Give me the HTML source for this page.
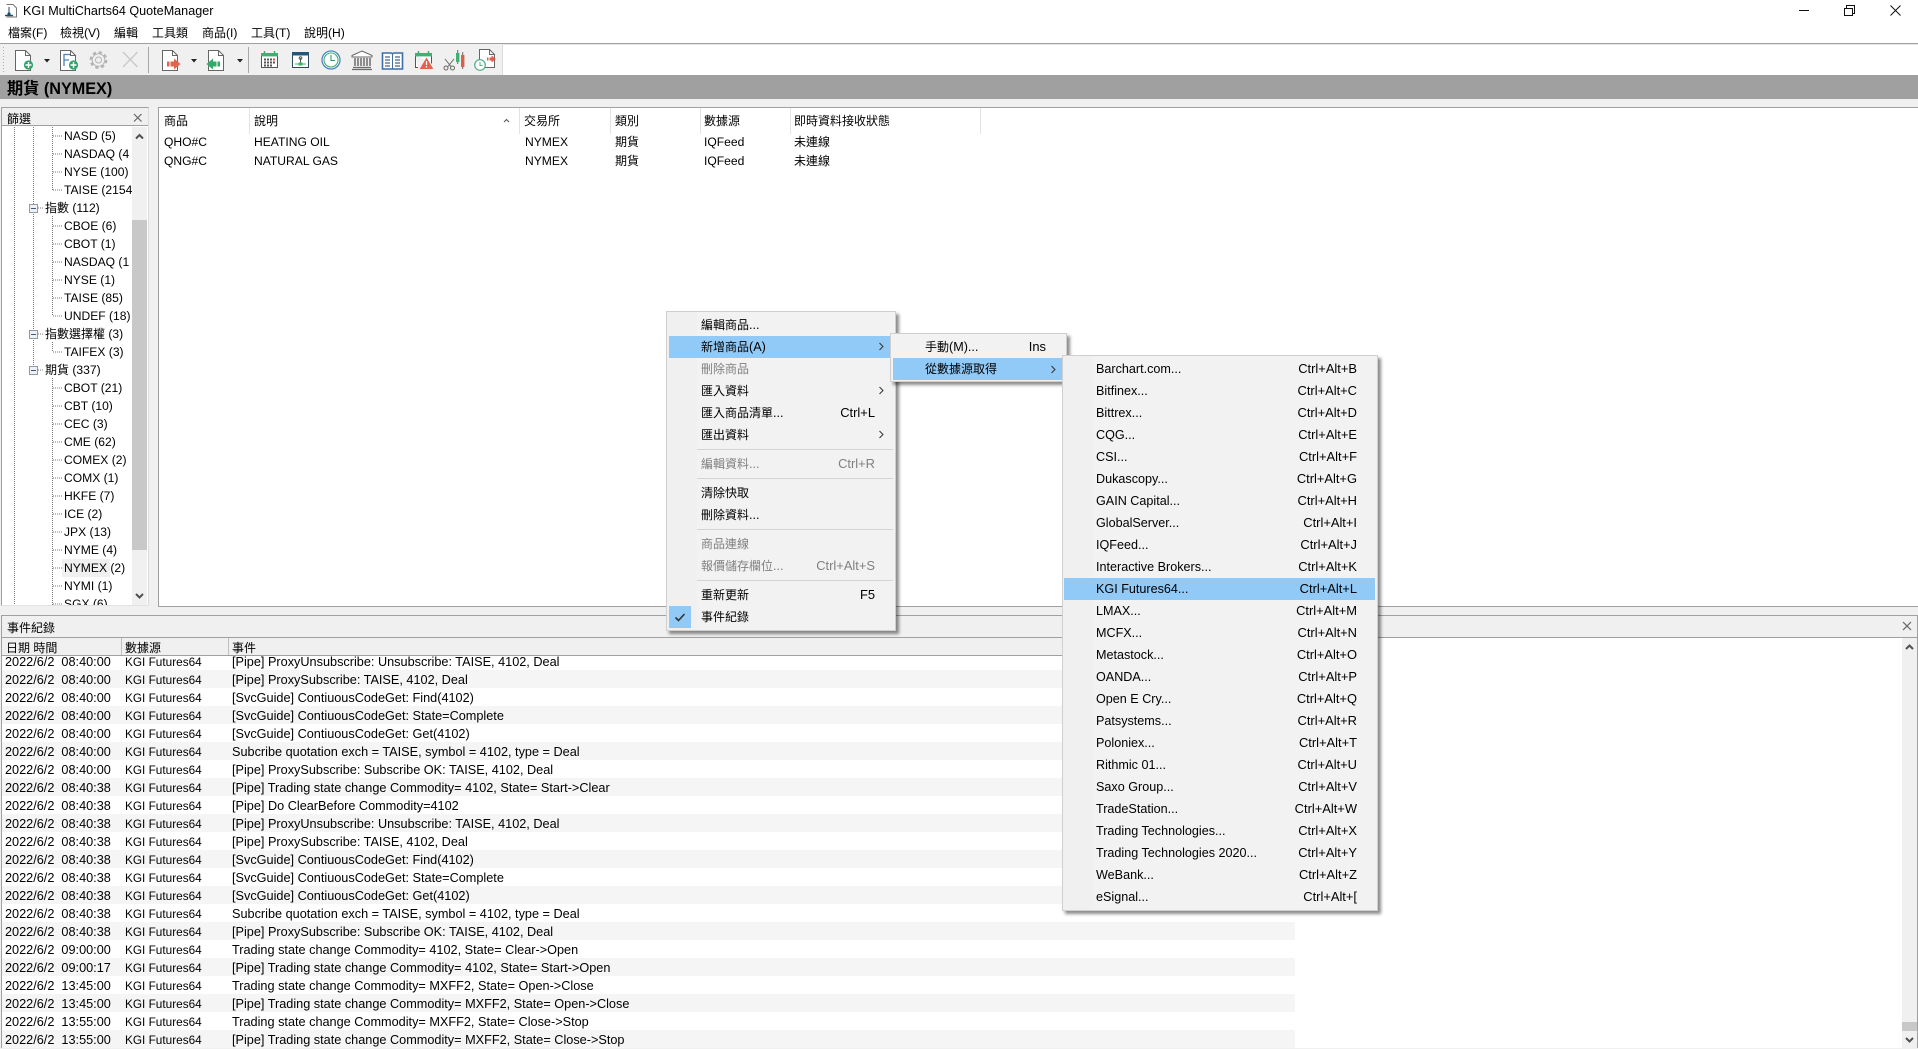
<!DOCTYPE html>
<html><head><meta charset="utf-8"><title>KGI MultiCharts64 QuoteManager</title>
<style>
html,body{margin:0;padding:0;width:1918px;height:1049px;overflow:hidden;background:#fff}
body{position:relative;font-family:"Liberation Sans","Noto Sans CJK TC",sans-serif;font-size:12.1px;color:#000}
div{position:absolute;box-sizing:border-box}
i{font-style:normal;font-size:12px}
.t{position:absolute;white-space:pre;height:16px;line-height:16px}
.tr{position:absolute;white-space:pre;height:16px;line-height:16px;text-align:right}
#mn{left:0;top:0;width:0;height:0;font-size:12.6px}
#mn .tr{font-size:12.9px}
.r{left:2px;width:1293px;height:18px;background:#fff}
.r.g{background:#f5f5f5}
.r span{position:absolute;top:0;line-height:21px;white-space:pre}
.r .a{left:3px;font-size:12.7px}.r .b{left:123px;font-size:11.8px}.r .c{left:230px;font-size:12.7px}
.m{background:#f2f2f2;border:1px solid #cfcfcf;box-shadow:3px 3px 3px rgba(0,0,0,.45)}
.d{color:#808080}
.h{background:#91c9f7}
.sp{height:1px;background:#d4d4d4}
.vs{width:1px;background:#e3e3e3}
</style></head><body>

<!-- title bar -->
<svg style="position:absolute;left:0;top:0" width="24" height="24"><path d="M6.5 4.5H13l3.5 3.5V17H6.5" fill="none" stroke="#777"/><path d="M5 15.5h8" stroke="#1d4a68" stroke-width="1.4"/><circle cx="9" cy="14" r="1.6" fill="#1d4a68"/><path d="M9 7v6" stroke="#1d4a68"/></svg>
<div class="t" style="left:23px;top:3px;font-size:12.6px">KGI MultiCharts64 QuoteManager</div>
<svg style="position:absolute;left:1790px;top:0" width="128" height="22" fill="none" stroke="#111"><path d="M9 10.5h10"/><path d="M54.5 8.5h8v7h-8zM56.5 8V5.5h8v8h-2"/><path d="M100.5 5.5l10 10M110.5 5.5l-10 10"/></svg>

<!-- menu bar -->
<div class="t" style="left:8px;top:25px"><i>檔案</i>(F)</div>
<div class="t" style="left:60px;top:25px"><i>檢視</i>(V)</div>
<div class="t" style="left:114px;top:25px"><i>編輯</i></div>
<div class="t" style="left:152px;top:25px"><i>工具類</i></div>
<div class="t" style="left:202px;top:25px"><i>商品</i>(I)</div>
<div class="t" style="left:251px;top:25px"><i>工具</i>(T)</div>
<div class="t" style="left:304px;top:25px"><i>說明</i>(H)</div>

<!-- toolbar -->
<div style="left:0;top:43px;width:1918px;height:1px;background:#a0a0a0"></div>
<div style="left:0;top:44px;width:1918px;height:1px;background:#e8e8e8"></div>
<div style="left:0;top:44px;width:503px;height:31px;background:#f0f0f0;border-right:1px solid #dcdcdc"></div>
<svg style="position:absolute;left:0;top:0" width="510" height="76">
<path d="M3.5 47v25" stroke="#b0b0b0" stroke-dasharray="1 2"/>
<g fill="#fff" stroke="#666">
<path d="M15.5 50.5h10l5 5v15h-15z"/>
<path d="M60.5 50.5h10l5 5v15h-15z"/>
<path d="M162.5 50.5h10l5 5v15h-15z"/>
<path d="M208.5 50.5h10l5 5v15h-15z"/>
<path d="M479.5 49.5h10l5 5v13h-15z"/>
</g>
<g fill="none" stroke="#666"><path d="M25.5 50.5v5h5M70.5 50.5v5h5M172.5 50.5v5h5M218.5 50.5v5h5M489.5 49.5v5h5"/></g>
<circle cx="28.5" cy="65" r="4.6" fill="#2fa36b"/><path d="M28.5 62v6M25.5 65h6" stroke="#fff" stroke-width="1.4"/>
<circle cx="73.5" cy="65" r="4.6" fill="#2fa36b"/><path d="M73.5 62v6M70.5 65h6" stroke="#fff" stroke-width="1.4"/>
<path d="M64 66V54.5h6M64 60h5" fill="none" stroke="#4a7fbf" stroke-width="1.3"/>
<path d="M44 59h6l-3 3.5z M191 59h6l-3 3.5z M237 59h6l-3 3.5z" fill="#222"/>
<!-- gear -->
<circle cx="98.5" cy="60" r="7.2" fill="none" stroke="#b4b4b4" stroke-width="3.4" stroke-dasharray="3 2.65"/>
<circle cx="98.5" cy="60" r="6.3" fill="#f0f0f0" stroke="#b4b4b4"/>
<circle cx="98.5" cy="60" r="3" fill="#f0f0f0" stroke="#b4b4b4"/>
<path d="M123 52l14.5 15M137.5 52L123 67" stroke="#c9c9c9" stroke-width="1.4"/>
<path d="M148.5 47v26M248.5 47v26" stroke="#a8a8a8"/>
<!-- red arrow -->
<path d="M167 61.500h2.500v5H167zM170.500 61.500h3.500v5h-3.500zM174 58.500l6.500 5.500-6.500 5.500z" fill="#e0654e"/>
<!-- green arrow -->
<path d="M206.500 64l6.500-5.500v11zM213 61.500h3.500v5H213zM217.500 61.500h2.500v5h-2.500z" fill="#33a96a"/>
<!-- calendar -->
<rect x="261.5" y="53.5" width="16" height="14" fill="#fff" stroke="#555"/>
<rect x="261" y="53" width="17" height="3.4" fill="#3eb06f"/><path d="M264.5 51v3M274.5 51v3" stroke="#3eb06f" stroke-width="1.5"/>
<g fill="#555"><rect x="264" y="58.5" width="2" height="2"/><rect x="267" y="58.5" width="2" height="2"/><rect x="270" y="58.5" width="2" height="2"/><rect x="273" y="58.5" width="2" height="2" fill="#d8543f"/><rect x="264" y="61.5" width="2" height="2"/><rect x="267" y="61.5" width="2" height="2"/><rect x="270" y="61.5" width="2" height="2"/><rect x="273" y="61.5" width="2" height="2"/><rect x="264" y="64.5" width="2" height="2"/><rect x="267" y="64.5" width="2" height="2"/><rect x="270" y="64.5" width="2" height="2"/></g>
<!-- window -->
<rect x="292.5" y="52.5" width="16" height="15" fill="#fff" stroke="#2d4a5e"/><rect x="292" y="52" width="17" height="3.5" fill="#245678"/>
<path d="M295 64h11" stroke="#3eb06f"/><path d="M300.5 58v5" stroke="#555"/><circle cx="300.5" cy="58" r="1.3" fill="none" stroke="#555"/><rect x="298.5" y="62.5" width="4" height="3" fill="#3eb06f"/>
<!-- clock -->
<circle cx="331" cy="60" r="9" fill="#fff" stroke="#4a86c5" stroke-width="1.3"/><circle cx="331" cy="60" r="7" fill="none" stroke="#3eb06f" stroke-width="1.1"/><path d="M331 55v5.5h4" fill="none" stroke="#2f8f63"/>
<!-- bank -->
<path d="M362 51l10 4.5v1.5h-20v-1.5z" fill="#fff" stroke="#6a6a6a"/>
<path d="M355 58v8M358 58v8M361 58v8M364 58v8M367 58v8M370 58v8" stroke="#6a6a6a" stroke-width="1.5"/>
<path d="M353 67.5h18M352 69.5h20" stroke="#6a6a6a" stroke-width="1.3"/>
<!-- book -->
<path d="M382.5 53h8.5c1 0 1.5 .8 1.5 1.5 0-.7.5-1.500 1.500-1.500h8.500v16h-20z" fill="#fff" stroke="#3d6ea5" stroke-width="1.6"/>
<path d="M392.500 54v15" stroke="#3d6ea5"/>
<path d="M385 57h5M385 60h5M385 63h5M385 66h5M395 57h5M395 60h5M395 63h5M395 66h5" stroke="#1f3f5f" stroke-width="1.1"/>
<!-- calendar warn -->
<path d="M415.500 54.500h16v9M418 67.500h-2.500v-13" fill="#fff" stroke="#555"/>
<rect x="415" y="53" width="17" height="3.4" fill="#3eb06f"/><path d="M418.500 51v3M428.500 51v3" stroke="#3eb06f" stroke-width="1.5"/>
<path d="M426.500 57.500l6.800 11.500h-13.600z" fill="#e8604c"/><path d="M426.500 61v4M426.500 66v1.500" stroke="#fff" stroke-width="1.200"/>
<!-- scissors + candles -->
<path d="M457.700 50v14" stroke="#666"/><rect x="456" y="53" width="3.400" height="9" fill="#3eb06f"/>
<path d="M462.700 52v17" stroke="#666"/><rect x="461" y="55" width="3.400" height="12" fill="#d8604c"/>
<path d="M454 59l-6 7.500M445 59l6 7.500" stroke="#666"/>
<circle cx="446" cy="68" r="2" fill="none" stroke="#666"/><circle cx="452.500" cy="68" r="2" fill="none" stroke="#666"/>
<!-- doc clock -->
<circle cx="480" cy="65" r="5.300" fill="#fff" stroke="#4caf7d" stroke-width="1.200"/><path d="M480 62v3.500h2.500" fill="none" stroke="#4caf7d"/>
<path d="M487 57.500h1.500v3h-1.500zM489.500 57.500h2v3h-2zM491.500 55.500l4.500 3.500-4.500 3.500z" fill="#d8604c"/>
</svg>

<!-- section header -->
<div style="left:0;top:75px;width:1918px;height:24px;background:#a0a0a0"></div>
<div class="t" style="left:7px;top:81px;font-size:16.2px;font-weight:bold">期貨 (NYMEX)</div>
<div style="left:0;top:99px;width:1918px;height:950px;background:#f0f0f0"></div>

<!-- left panel -->
<div style="left:1px;top:107px;width:148px;height:499px;background:#fff;border:1px solid #a0a0a0;border-right:1px solid #dcdcdc;border-bottom:1px solid #e2e2e2;overflow:hidden"></div>
<div style="left:2px;top:108px;width:146px;height:18px;background:#f0f0f0;border-bottom:1px solid #a0a0a0"></div>
<div class="t" style="left:7px;top:111px"><i>篩選</i></div>
<svg style="position:absolute;left:132px;top:112px" width="16" height="14"><path d="M2 2l7.500 7.500M9.500 2L2 9.500" stroke="#666" stroke-width="1.200"/></svg>
<svg style="position:absolute;left:0;top:127px" width="132" height="478">
<g stroke="#777" stroke-dasharray="1 1" fill="none">
<path d="M14.500 0v478M33.500 0v79M33.500 87v155M52.500 0v63M52.500 89v100M52.500 215v10M52.500 251v227M33.500 213v22"/>
<path d="M53 9h9M53 27h9M53 45h9M53 63h9M53 99h9M53 117h9M53 135h9M53 153h9M53 171h9M53 189h9M53 225h9M53 261h9M53 279h9M53 297h9M53 315h9M53 333h9M53 351h9M53 369h9M53 387h9M53 405h9M53 423h9M53 441h9M53 459h9M53 477h9M38 81h5M38 207h5M38 243h5"/>
</g>
<g fill="#fff" stroke="#8f9aa6"><rect x="29.500" y="77.500" width="8" height="8" fill="#eef1f5"/><rect x="29.500" y="203.500" width="8" height="8" fill="#eef1f5"/><rect x="29.500" y="239.500" width="8" height="8" fill="#eef1f5"/></g>
<path d="M31 81.500h5M31 207.500h5M31 243.500h5" stroke="#3a5a80"/>
</svg>
<div style="left:62px;top:559px;width:48px;height:18px;background:#f0f0f0"></div>
<div style="left:2px;top:127px;width:130px;height:478px;overflow:hidden">
<div class="t" style="left:62px;top:1px">NASD (5)</div>
<div class="t" style="left:62px;top:19px">NASDAQ (4</div>
<div class="t" style="left:62px;top:37px">NYSE (100)</div>
<div class="t" style="left:62px;top:55px">TAISE (2154</div>
<div class="t" style="left:43px;top:73px"><i>指數</i> (112)</div>
<div class="t" style="left:62px;top:91px">CBOE (6)</div>
<div class="t" style="left:62px;top:109px">CBOT (1)</div>
<div class="t" style="left:62px;top:127px">NASDAQ (1</div>
<div class="t" style="left:62px;top:145px">NYSE (1)</div>
<div class="t" style="left:62px;top:163px">TAISE (85)</div>
<div class="t" style="left:62px;top:181px">UNDEF (18)</div>
<div class="t" style="left:43px;top:199px"><i>指數選擇權</i> (3)</div>
<div class="t" style="left:62px;top:217px">TAIFEX (3)</div>
<div class="t" style="left:43px;top:235px"><i>期貨</i> (337)</div>
<div class="t" style="left:62px;top:253px">CBOT (21)</div>
<div class="t" style="left:62px;top:271px">CBT (10)</div>
<div class="t" style="left:62px;top:289px">CEC (3)</div>
<div class="t" style="left:62px;top:307px">CME (62)</div>
<div class="t" style="left:62px;top:325px">COMEX (2)</div>
<div class="t" style="left:62px;top:343px">COMX (1)</div>
<div class="t" style="left:62px;top:361px">HKFE (7)</div>
<div class="t" style="left:62px;top:379px">ICE (2)</div>
<div class="t" style="left:62px;top:397px">JPX (13)</div>
<div class="t" style="left:62px;top:415px">NYME (4)</div>
<div class="t" style="left:62px;top:433px">NYMEX (2)</div>
<div class="t" style="left:62px;top:451px">NYMI (1)</div>
<div class="t" style="left:62px;top:469px">SGX (6)</div>
</div>
<div style="left:132px;top:127px;width:15px;height:478px;background:#f0f0f0"></div>
<div style="left:132px;top:220px;width:15px;height:330px;background:#c8c8c8"></div>
<svg style="position:absolute;left:132px;top:127px" width="15" height="478" fill="none" stroke="#505050" stroke-width="2"><path d="M4 11.500l3.500-3.500 3.500 3.500M4 467l3.500 3.500 3.500-3.500"/></svg>

<!-- right panel -->
<div style="left:158px;top:107px;width:1760px;height:500px;background:#fff;border:1px solid #a0a0a0;border-right:0"></div>
<div class="vs" style="left:249px;top:108px;height:26px"></div>
<div class="vs" style="left:519px;top:108px;height:26px"></div>
<div class="vs" style="left:610px;top:108px;height:26px"></div>
<div class="vs" style="left:700px;top:108px;height:26px"></div>
<div class="vs" style="left:790px;top:108px;height:26px"></div>
<div class="vs" style="left:980px;top:108px;height:26px"></div>
<div class="t" style="left:164px;top:113px"><i>商品</i></div>
<div class="t" style="left:254px;top:113px"><i>說明</i></div>
<svg style="position:absolute;left:503px;top:118px" width="8" height="6"><path d="M1 4l2.500-2.500L6 4" fill="none" stroke="#555"/></svg>
<div class="t" style="left:524px;top:113px"><i>交易所</i></div>
<div class="t" style="left:615px;top:113px"><i>類別</i></div>
<div class="t" style="left:704px;top:113px"><i>數據源</i></div>
<div class="t" style="left:794px;top:113px"><i>即時資料接收狀態</i></div>
<div class="t" style="left:164px;top:134px">QHO#C</div><div class="t" style="left:254px;top:134px">HEATING OIL</div><div class="t" style="left:525px;top:134px">NYMEX</div><div class="t" style="left:615px;top:134px"><i>期貨</i></div><div class="t" style="left:704px;top:134px">IQFeed</div><div class="t" style="left:794px;top:134px"><i>未連線</i></div>
<div class="t" style="left:164px;top:153px">QNG#C</div><div class="t" style="left:254px;top:153px">NATURAL GAS</div><div class="t" style="left:525px;top:153px">NYMEX</div><div class="t" style="left:615px;top:153px"><i>期貨</i></div><div class="t" style="left:704px;top:153px">IQFeed</div><div class="t" style="left:794px;top:153px"><i>未連線</i></div>

<!-- bottom panel -->
<div style="left:1px;top:615px;width:1917px;height:434px;background:#fff;border-top:1px solid #a0a0a0;border-left:1px solid #a0a0a0;border-right:1px solid #a0a0a0"></div>
<div style="left:2px;top:616px;width:1915px;height:22px;background:#f0f0f0;border-bottom:1px solid #a0a0a0"></div>
<div class="t" style="left:7px;top:620px"><i>事件紀錄</i></div>
<svg style="position:absolute;left:1902px;top:620px" width="12" height="14"><path d="M1 2l8 8M9 2l-8 8" stroke="#666" stroke-width="1.200"/></svg>
<div style="left:2px;top:638px;width:1295px;height:18px;background:#f0f0f0;border-bottom:1px solid #a0a0a0"></div>
<div style="left:121px;top:638px;width:1px;height:17px;background:#c0c0c0"></div>
<div style="left:228px;top:638px;width:1px;height:17px;background:#c0c0c0"></div>
<div class="t" style="left:6px;top:640px"><i>日期 時間</i></div>
<div class="t" style="left:125px;top:640px"><i>數據源</i></div>
<div class="t" style="left:232px;top:640px"><i>事件</i></div>
<div style="left:0;top:656px;width:1295px;height:392px;overflow:hidden">
<div class="r" style="top:-4px"><span class="a">2022/6/2  08:40:00</span><span class="b">KGI Futures64</span><span class="c">[Pipe] ProxyUnsubscribe: Unsubscribe: TAISE, 4102, Deal</span></div>
<div class="r g" style="top:14px"><span class="a">2022/6/2  08:40:00</span><span class="b">KGI Futures64</span><span class="c">[Pipe] ProxySubscribe: TAISE, 4102, Deal</span></div>
<div class="r" style="top:32px"><span class="a">2022/6/2  08:40:00</span><span class="b">KGI Futures64</span><span class="c">[SvcGuide] ContiuousCodeGet: Find(4102)</span></div>
<div class="r g" style="top:50px"><span class="a">2022/6/2  08:40:00</span><span class="b">KGI Futures64</span><span class="c">[SvcGuide] ContiuousCodeGet: State=Complete</span></div>
<div class="r" style="top:68px"><span class="a">2022/6/2  08:40:00</span><span class="b">KGI Futures64</span><span class="c">[SvcGuide] ContiuousCodeGet: Get(4102)</span></div>
<div class="r g" style="top:86px"><span class="a">2022/6/2  08:40:00</span><span class="b">KGI Futures64</span><span class="c">Subcribe quotation exch = TAISE, symbol = 4102, type = Deal</span></div>
<div class="r" style="top:104px"><span class="a">2022/6/2  08:40:00</span><span class="b">KGI Futures64</span><span class="c">[Pipe] ProxySubscribe: Subscribe OK: TAISE, 4102, Deal</span></div>
<div class="r g" style="top:122px"><span class="a">2022/6/2  08:40:38</span><span class="b">KGI Futures64</span><span class="c">[Pipe] Trading state change Commodity= 4102, State= Start-&gt;Clear</span></div>
<div class="r" style="top:140px"><span class="a">2022/6/2  08:40:38</span><span class="b">KGI Futures64</span><span class="c">[Pipe] Do ClearBefore Commodity=4102</span></div>
<div class="r g" style="top:158px"><span class="a">2022/6/2  08:40:38</span><span class="b">KGI Futures64</span><span class="c">[Pipe] ProxyUnsubscribe: Unsubscribe: TAISE, 4102, Deal</span></div>
<div class="r" style="top:176px"><span class="a">2022/6/2  08:40:38</span><span class="b">KGI Futures64</span><span class="c">[Pipe] ProxySubscribe: TAISE, 4102, Deal</span></div>
<div class="r g" style="top:194px"><span class="a">2022/6/2  08:40:38</span><span class="b">KGI Futures64</span><span class="c">[SvcGuide] ContiuousCodeGet: Find(4102)</span></div>
<div class="r" style="top:212px"><span class="a">2022/6/2  08:40:38</span><span class="b">KGI Futures64</span><span class="c">[SvcGuide] ContiuousCodeGet: State=Complete</span></div>
<div class="r g" style="top:230px"><span class="a">2022/6/2  08:40:38</span><span class="b">KGI Futures64</span><span class="c">[SvcGuide] ContiuousCodeGet: Get(4102)</span></div>
<div class="r" style="top:248px"><span class="a">2022/6/2  08:40:38</span><span class="b">KGI Futures64</span><span class="c">Subcribe quotation exch = TAISE, symbol = 4102, type = Deal</span></div>
<div class="r g" style="top:266px"><span class="a">2022/6/2  08:40:38</span><span class="b">KGI Futures64</span><span class="c">[Pipe] ProxySubscribe: Subscribe OK: TAISE, 4102, Deal</span></div>
<div class="r" style="top:284px"><span class="a">2022/6/2  09:00:00</span><span class="b">KGI Futures64</span><span class="c">Trading state change Commodity= 4102, State= Clear-&gt;Open</span></div>
<div class="r g" style="top:302px"><span class="a">2022/6/2  09:00:17</span><span class="b">KGI Futures64</span><span class="c">[Pipe] Trading state change Commodity= 4102, State= Start-&gt;Open</span></div>
<div class="r" style="top:320px"><span class="a">2022/6/2  13:45:00</span><span class="b">KGI Futures64</span><span class="c">Trading state change Commodity= MXFF2, State= Open-&gt;Close</span></div>
<div class="r g" style="top:338px"><span class="a">2022/6/2  13:45:00</span><span class="b">KGI Futures64</span><span class="c">[Pipe] Trading state change Commodity= MXFF2, State= Open-&gt;Close</span></div>
<div class="r" style="top:356px"><span class="a">2022/6/2  13:55:00</span><span class="b">KGI Futures64</span><span class="c">Trading state change Commodity= MXFF2, State= Close-&gt;Stop</span></div>
<div class="r g" style="top:374px"><span class="a">2022/6/2  13:55:00</span><span class="b">KGI Futures64</span><span class="c">[Pipe] Trading state change Commodity= MXFF2, State= Close-&gt;Stop</span></div>
</div>
<div style="left:1902px;top:638px;width:15px;height:410px;background:#f0f0f0"></div>
<div style="left:1902px;top:1022px;width:15px;height:9px;background:#c8c8c8"></div>
<svg style="position:absolute;left:1902px;top:638px" width="15" height="410" fill="none" stroke="#505050" stroke-width="2"><path d="M4 11l3.500-3.500L11 11M4 400l3.500 3.500 3.500-3.500"/></svg>
<div style="left:1px;top:1048px;width:1917px;height:1px;background:#f0f0f0"></div>

<div id="mn">
<!-- context menu -->
<div class="m" style="left:666px;top:311px;width:230px;height:320px"></div>
<div style="left:667px;top:312px;width:30px;height:318px;background:#f0f0f0"></div>
<div class="h" style="left:669px;top:336px;width:222px;height:22px"></div>
<div class="h" style="left:669px;top:606px;width:22px;height:22px"></div>
<svg style="position:absolute;left:669px;top:606px" width="22" height="22"><path d="M6.500 11.500l3 3 6-6.500" fill="none" stroke="#333" stroke-width="1.600"/></svg>
<div class="sp" style="left:697px;top:449px;width:196px"></div>
<div class="sp" style="left:697px;top:478px;width:196px"></div>
<div class="sp" style="left:697px;top:529px;width:196px"></div>
<div class="sp" style="left:697px;top:580px;width:196px"></div>
<div class="t" style="left:701px;top:317px"><i>編輯商品</i>...</div>
<div class="t" style="left:701px;top:339px"><i>新增商品</i>(A)</div>
<div class="t d" style="left:701px;top:361px"><i>刪除商品</i></div>
<div class="t" style="left:701px;top:383px"><i>匯入資料</i></div>
<div class="t" style="left:701px;top:405px"><i>匯入商品清單</i>...</div>
<div class="tr" style="left:775px;top:405px;width:100px">Ctrl+L</div>
<div class="t" style="left:701px;top:427px"><i>匯出資料</i></div>
<div class="t d" style="left:701px;top:456px"><i>編輯資料</i>...</div>
<div class="tr d" style="left:775px;top:456px;width:100px">Ctrl+R</div>
<div class="t" style="left:701px;top:485px"><i>清除快取</i></div>
<div class="t" style="left:701px;top:507px"><i>刪除資料</i>...</div>
<div class="t d" style="left:701px;top:536px"><i>商品連線</i></div>
<div class="t d" style="left:701px;top:558px"><i>報價儲存欄位</i>...</div>
<div class="tr d" style="left:775px;top:558px;width:100px">Ctrl+Alt+S</div>
<div class="t" style="left:701px;top:587px"><i>重新更新</i></div>
<div class="tr" style="left:775px;top:587px;width:100px">F5</div>
<div class="t" style="left:701px;top:609px"><i>事件紀錄</i></div>
<svg style="position:absolute;left:878px;top:340px" width="8" height="104" fill="none" stroke="#333"><path d="M1.500 3l3.500 3.500L1.500 10M1.500 47l3.500 3.500L1.500 54M1.500 91l3.500 3.500L1.500 98" /></svg>

<!-- submenu 2 -->
<div class="m" style="left:890px;top:333px;width:177px;height:49px"></div>
<div class="h" style="left:893px;top:358px;width:172px;height:22px"></div>
<div class="t" style="left:925px;top:339px"><i>手動</i>(M)...</div>
<div class="tr" style="left:946px;top:339px;width:100px">Ins</div>
<div class="t" style="left:925px;top:361px"><i>從數據源取得</i></div>
<svg style="position:absolute;left:1050px;top:364px" width="8" height="12" fill="none" stroke="#333"><path d="M1.500 2l3.500 3.500L1.500 9"/></svg>

<!-- submenu 3 -->
<div class="m" style="left:1062px;top:355px;width:316px;height:556px"></div>
<div style="left:1063px;top:356px;width:30px;height:554px;background:#f0f0f0"></div>
<div class="h" style="left:1064px;top:578px;width:311px;height:22px"></div>
<div class="t" style="left:1096px;top:361px">Barchart.com...</div><div class="tr" style="left:1207px;top:361px;width:150px">Ctrl+Alt+B</div>
<div class="t" style="left:1096px;top:383px">Bitfinex...</div><div class="tr" style="left:1207px;top:383px;width:150px">Ctrl+Alt+C</div>
<div class="t" style="left:1096px;top:405px">Bittrex...</div><div class="tr" style="left:1207px;top:405px;width:150px">Ctrl+Alt+D</div>
<div class="t" style="left:1096px;top:427px">CQG...</div><div class="tr" style="left:1207px;top:427px;width:150px">Ctrl+Alt+E</div>
<div class="t" style="left:1096px;top:449px">CSI...</div><div class="tr" style="left:1207px;top:449px;width:150px">Ctrl+Alt+F</div>
<div class="t" style="left:1096px;top:471px">Dukascopy...</div><div class="tr" style="left:1207px;top:471px;width:150px">Ctrl+Alt+G</div>
<div class="t" style="left:1096px;top:493px">GAIN Capital...</div><div class="tr" style="left:1207px;top:493px;width:150px">Ctrl+Alt+H</div>
<div class="t" style="left:1096px;top:515px">GlobalServer...</div><div class="tr" style="left:1207px;top:515px;width:150px">Ctrl+Alt+I</div>
<div class="t" style="left:1096px;top:537px">IQFeed...</div><div class="tr" style="left:1207px;top:537px;width:150px">Ctrl+Alt+J</div>
<div class="t" style="left:1096px;top:559px">Interactive Brokers...</div><div class="tr" style="left:1207px;top:559px;width:150px">Ctrl+Alt+K</div>
<div class="t" style="left:1096px;top:581px">KGI Futures64...</div><div class="tr" style="left:1207px;top:581px;width:150px">Ctrl+Alt+L</div>
<div class="t" style="left:1096px;top:603px">LMAX...</div><div class="tr" style="left:1207px;top:603px;width:150px">Ctrl+Alt+M</div>
<div class="t" style="left:1096px;top:625px">MCFX...</div><div class="tr" style="left:1207px;top:625px;width:150px">Ctrl+Alt+N</div>
<div class="t" style="left:1096px;top:647px">Metastock...</div><div class="tr" style="left:1207px;top:647px;width:150px">Ctrl+Alt+O</div>
<div class="t" style="left:1096px;top:669px">OANDA...</div><div class="tr" style="left:1207px;top:669px;width:150px">Ctrl+Alt+P</div>
<div class="t" style="left:1096px;top:691px">Open E Cry...</div><div class="tr" style="left:1207px;top:691px;width:150px">Ctrl+Alt+Q</div>
<div class="t" style="left:1096px;top:713px">Patsystems...</div><div class="tr" style="left:1207px;top:713px;width:150px">Ctrl+Alt+R</div>
<div class="t" style="left:1096px;top:735px">Poloniex...</div><div class="tr" style="left:1207px;top:735px;width:150px">Ctrl+Alt+T</div>
<div class="t" style="left:1096px;top:757px">Rithmic 01...</div><div class="tr" style="left:1207px;top:757px;width:150px">Ctrl+Alt+U</div>
<div class="t" style="left:1096px;top:779px">Saxo Group...</div><div class="tr" style="left:1207px;top:779px;width:150px">Ctrl+Alt+V</div>
<div class="t" style="left:1096px;top:801px">TradeStation...</div><div class="tr" style="left:1207px;top:801px;width:150px">Ctrl+Alt+W</div>
<div class="t" style="left:1096px;top:823px">Trading Technologies...</div><div class="tr" style="left:1207px;top:823px;width:150px">Ctrl+Alt+X</div>
<div class="t" style="left:1096px;top:845px">Trading Technologies 2020...</div><div class="tr" style="left:1207px;top:845px;width:150px">Ctrl+Alt+Y</div>
<div class="t" style="left:1096px;top:867px">WeBank...</div><div class="tr" style="left:1207px;top:867px;width:150px">Ctrl+Alt+Z</div>
<div class="t" style="left:1096px;top:889px">eSignal...</div><div class="tr" style="left:1207px;top:889px;width:150px">Ctrl+Alt+[</div>
</div>
</body></html>
